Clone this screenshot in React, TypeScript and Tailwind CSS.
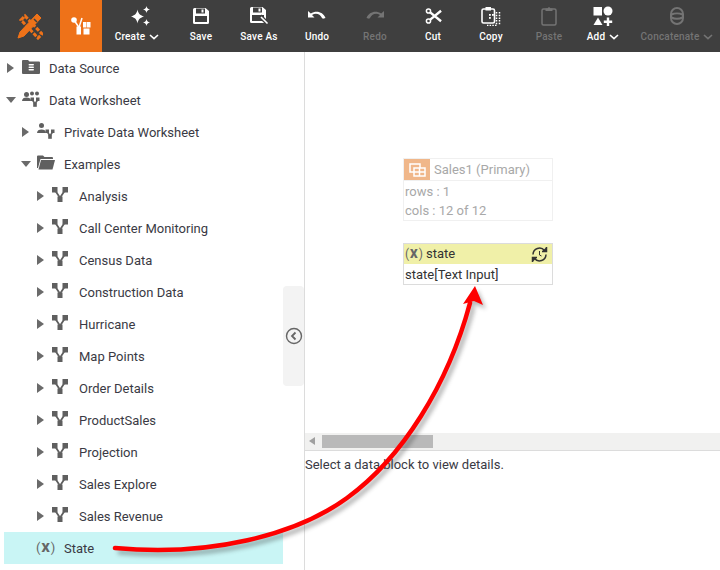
import type { ReactNode } from "react";

const ON = "#ffffff";
const OFF = "#747474";

function Chevron({ color = "#fff" }: { color?: string }) {
  return (
    <svg width="10" height="6" viewBox="0 0 10 6" className="ml-[4px]">
      <path d="M1 1l4 3.600L9 1" fill="none" stroke={color} strokeWidth="1.600" />
    </svg>
  );
}

function Sparkle() {
  return (
    <svg width="20" height="20" viewBox="0 0 20 20" fill="#fff" className="ml-[8px]">
      <path d="M6.500 3.500C7.300 7.500 8.500 9 13 10.500 8.500 12 7.300 13.500 6.500 17.500 5.700 13.500 4.500 12 0 10.500 4.500 9 5.700 7.500 6.500 3.500z" />
      <path d="M15.500 0C15.900 2 16.500 2.700 19 3.500 16.500 4.300 15.900 5 15.500 7 15.100 5 14.500 4.300 12 3.500 14.500 2.700 15.100 2 15.500 0z" />
      <path d="M15.500 13C15.900 15 16.500 15.700 19 16.500 16.500 17.300 15.900 18 15.500 20 15.100 18 14.500 17.300 12 16.500 14.500 15.700 15.100 15 15.500 13z" />
    </svg>
  );
}

function SaveIcon() {
  return (
    <svg width="18" height="18" viewBox="0 0 18 18">
      <path d="M2.500 1h11l3.500 3v11.500a1.500 1.500 0 0 1-1.500 1.500h-13A1.500 1.500 0 0 1 1 15.500v-13A1.500 1.500 0 0 1 2.500 1z" fill={ON} />
      <rect x="4" y="1.500" width="9" height="5" fill="#3f3f3f" />
      <rect x="9.500" y="2.500" width="2" height="3" fill={ON} />
      <rect x="3" y="9" width="12" height="6" fill="#3f3f3f" />
    </svg>
  );
}

function SaveAsIcon() {
  return (
    <svg width="20" height="19" viewBox="0 0 20 19">
      <path d="M2.500 1h11l3.500 3v11.500a1.500 1.500 0 0 1-1.500 1.500h-13A1.500 1.500 0 0 1 1 15.500v-13A1.500 1.500 0 0 1 2.500 1z" fill={ON} />
      <rect x="4" y="1.500" width="9" height="5" fill="#3f3f3f" />
      <rect x="9.500" y="2.500" width="2" height="3" fill={ON} />
      <rect x="3" y="9" width="12" height="6" fill="#3f3f3f" />
      <path d="M11 10l7 7" stroke="#3f3f3f" strokeWidth="4" />
      <path d="M12 11l6.500 6.500" stroke={ON} strokeWidth="1.600" />
    </svg>
  );
}

function UndoIcon({ flip, color }: { flip?: boolean; color: string }) {
  return (
    <svg width="18" height="12" viewBox="0 0 18 12" className={flip ? "-scale-x-100" : ""}>
      <path d="M0 1v6.500h6.500L4 5c3.500-2.500 8-1.500 10 3l1 .8L17.500 8C15 1.500 8 0 2.800 3.500z" fill={color} />
    </svg>
  );
}

function Scissors() {
  return (
    <svg width="17" height="18" viewBox="0 0 18 18" fill="none" stroke={ON}>
      <circle cx="3.700" cy="3.700" r="2.200" strokeWidth="1.600" />
      <circle cx="3.700" cy="14.300" r="2.200" strokeWidth="1.600" />
      <path d="M5.500 5.200L17 14.500M5.500 12.800L17 3.500" strokeWidth="2.600" />
    </svg>
  );
}

function CopyIcon() {
  return (
    <svg width="20" height="20" viewBox="0 0 20 20" fill="none">
      <rect x="1" y="3" width="12.500" height="14" rx="1.500" stroke={ON} strokeWidth="1.600" />
      <rect x="4.500" y="1" width="5.500" height="3.500" fill={ON} />
      <rect x="8" y="8" width="1.800" height="1.800" fill={ON} />
      <rect x="11" y="8" width="1.800" height="1.800" fill={ON} />
      <rect x="8" y="11" width="1.800" height="1.800" fill={ON} />
      <path d="M15.500 6v13.500H6" stroke={ON} strokeWidth="1.500" strokeDasharray="1.500 1.200" />
      <path d="M18.500 6v13.500" stroke={ON} strokeWidth="1.500" strokeDasharray="1.500 1.200" />
    </svg>
  );
}

function PasteIcon() {
  return (
    <svg width="16" height="20" viewBox="0 0 16 20" fill="none">
      <rect x="1" y="3" width="14" height="16" rx="1.500" stroke={OFF} strokeWidth="1.500" />
      <path d="M4.500 5V2.500h2.200a1.300 1.300 0 0 1 2.600 0h2.200V5z" fill={OFF} />
    </svg>
  );
}

function AddIcon() {
  return (
    <svg width="20" height="20" viewBox="0 0 20 20" fill={ON}>
      <rect x="0.500" y="1" width="8.500" height="8.500" />
      <circle cx="15" cy="5" r="4.500" />
      <path d="M5 11.500l4.500 7.500h-9z" />
      <path d="M13.800 11.500h2.400v3h3v2.400h-3v3h-2.400v-3h-3v-2.400h3z" />
    </svg>
  );
}

function ConcatIcon() {
  return (
    <svg width="16" height="20" viewBox="0 0 16 20" fill="none" stroke={OFF} strokeWidth="2">
      <rect x="2" y="2" width="12" height="16" rx="6" />
      <path d="M2.500 8.500c3-1.500 8-1.500 11 0M2.500 11.500c3 1.500 8 1.500 11 0" />
    </svg>
  );
}

function Tool({
  label,
  icon,
  width,
  off,
  menu,
}: {
  label: string;
  icon: ReactNode;
  width: string;
  off?: boolean;
  menu?: boolean;
}) {
  return (
    <div className={`flex flex-col items-center ${width}`}>
      <div className="flex h-[30px] items-center justify-center pt-[1px]">{icon}</div>
      <div
        className={`mt-[1px] flex h-[12px] items-center text-[10px] leading-[12px] tracking-[0.2px] font-medium ${
          off ? "text-[#747474]" : "text-white"
        }`}
      >
        {label}
        {menu && <Chevron color={off ? OFF : "#fff"} />}
      </div>
    </div>
  );
}

function Toolbar() {
  return (
    <div className="flex h-[52px] items-stretch bg-[#3f3f3f]">
      <div className="flex w-[60px] items-center justify-center">
        <svg width="26" height="28" viewBox="0 0 26 28" fill="none" stroke="#ee7219">
          <path d="M4 8l4-4 17 18-4 4z" strokeWidth="3" strokeDasharray="4 1.500" />
          <path d="M20 2l4 4L7 24l-6 2 2-6z" fill="#ee7219" strokeWidth="1" />
          <path d="M17 7l3 3" stroke="#3f3f3f" strokeWidth="1.500" />
        </svg>
      </div>
      <div className="flex w-[42px] items-center justify-center bg-[#ee7219]">
        <svg width="20" height="18" viewBox="0 0 20 18" fill={ON}>
          <circle cx="3" cy="3" r="2.800" />
          <path d="M3 3l5 7.500" stroke={ON} strokeWidth="1.500" />
          <path d="M11 1l-3 9.500" stroke={ON} strokeWidth="1.500" />
          <rect x="5.500" y="9.500" width="4.500" height="8" />
          <rect x="12" y="5" width="3.500" height="5.500" />
          <rect x="16" y="5" width="3.500" height="5.500" />
          <rect x="12.500" y="11.500" width="6" height="6" />
        </svg>
      </div>
      <Tool label="Create" width="w-[70px]" icon={<Sparkle />} menu />
      <Tool label="Save" width="w-[58px]" icon={<SaveIcon />} />
      <Tool label="Save As" width="w-[58px]" icon={<SaveAsIcon />} />
      <Tool label="Undo" width="w-[58px]" icon={<UndoIcon color={ON} />} />
      <Tool label="Redo" width="w-[58px]" icon={<UndoIcon flip color={OFF} />} off />
      <Tool label="Cut" width="w-[58px]" icon={<Scissors />} />
      <Tool label="Copy" width="w-[58px]" icon={<CopyIcon />} />
      <Tool label="Paste" width="w-[58px]" icon={<PasteIcon />} off />
      <Tool label="Add" width="w-[50px]" icon={<AddIcon />} menu />
      <Tool label="Concatenate" width="w-[92px] pl-[6px]" icon={<ConcatIcon />} off menu />
    </div>
  );
}

function Caret({ open }: { open?: boolean }) {
  return open ? (
    <svg width="10" height="6" viewBox="0 0 10 6">
      <path d="M0 0h10L5 6z" fill="#6a6a6a" />
    </svg>
  ) : (
    <svg width="10" height="10" viewBox="0 0 10 10" className="ml-[1px]">
      <path d="M0 0l7 5-7 5z" fill="#6a6a6a" />
    </svg>
  );
}

function FlowIcon() {
  return (
    <svg width="16" height="15" viewBox="0 0 16 15" fill="#5f5f5f">
      <rect x="0" y="0" width="5.500" height="5.500" />
      <rect x="10.500" y="0" width="5.500" height="5.500" />
      <rect x="5.500" y="9.500" width="5" height="5.500" />
      <path d="M3.500 4l4 6M12.500 4l-4 6" stroke="#5f5f5f" strokeWidth="1.800" />
    </svg>
  );
}

function SourceIcon() {
  return (
    <svg width="18" height="15" viewBox="0 0 18 15">
      <path d="M0 2a1 1 0 0 1 1-1h5l1.500 1.500H17a1 1 0 0 1 1 1V14a1 1 0 0 1-1 1H1a1 1 0 0 1-1-1z" fill="#5f5f5f" />
      <rect x="6.500" y="5" width="5.500" height="1.600" rx=".8" fill="#fff" />
      <rect x="6.500" y="7.500" width="5.500" height="1.600" rx=".8" fill="#fff" />
      <rect x="6.500" y="10" width="5.500" height="1.600" rx=".8" fill="#fff" />
    </svg>
  );
}

function WorksheetIcon({ shared }: { shared?: boolean }) {
  return (
    <svg width="18" height="16" viewBox="0 0 18 16" fill="#5f5f5f">
      <circle cx="4.500" cy={shared ? 3.500 : 2.500} r="2.500" />
      <path d="M0 10c0-2.500 2-3.500 4.500-3.500S9 7.500 9 10z" />
      {shared && <circle cx="10" cy="2.500" r="2" />}
      {shared && <circle cx="15" cy="2.500" r="2" />}
      <rect x="8.500" y="6.500" width="3.500" height="3.500" />
      <rect x="14" y="6.500" width="3.500" height="3.500" />
      <rect x="11.200" y="12" width="3.600" height="3.800" />
      <path d="M10.500 9l2.500 4M15.500 9L13 13" stroke="#5f5f5f" strokeWidth="1.600" />
    </svg>
  );
}

function FolderIcon() {
  return (
    <svg width="18" height="15" viewBox="0 0 18 15" fill="#5f5f5f">
      <path d="M0 1.500A1 1 0 0 1 1 .5h5L7.500 2H15a1 1 0 0 1 1 1v1H3.500L1 13H0z" />
      <path d="M4 5h14l-2.500 9.500H1.500z" />
    </svg>
  );
}

function VarMark({ className }: { className: string }) {
  return (
    <span className={`tracking-[1px] text-[#666] ${className}`}>
      (<span className="font-black">X</span>)
    </span>
  );
}

function Row({
  left,
  open,
  icon,
  label,
}: {
  left: string;
  open?: boolean;
  icon: ReactNode;
  label: string;
}) {
  return (
    <div className={`flex h-8 items-center ${left}`}>
      <div className="flex w-[16px] shrink-0 items-center">
        <Caret open={open} />
      </div>
      <div className="flex w-[27px] shrink-0 items-center pb-[3px]">{icon}</div>
      <span className="mt-[2px] text-[13px] text-[#3a3a44]">{label}</span>
    </div>
  );
}

const EXAMPLES = [
  "Analysis",
  "Call Center Monitoring",
  "Census Data",
  "Construction Data",
  "Hurricane",
  "Map Points",
  "Order Details",
  "ProductSales",
  "Projection",
  "Sales Explore",
  "Sales Revenue",
];

function Sidebar() {
  return (
    <div className="w-[305px] shrink-0 border-r border-[#dcdcdc]">
      <Row left="pl-[6px]" icon={<SourceIcon />} label="Data Source" />
      <Row left="pl-[6px]" open icon={<WorksheetIcon shared />} label="Data Worksheet" />
      <Row left="pl-[21px]" icon={<WorksheetIcon />} label="Private Data Worksheet" />
      <Row left="pl-[21px]" open icon={<FolderIcon />} label="Examples" />
      {EXAMPLES.map((name) => (
        <Row key={name} left="pl-[36px]" icon={<FlowIcon />} label={name} />
      ))}
      <div className="ml-[4px] flex h-8 w-[279px] items-center bg-[#c9f5f5] pl-[32px]">
        <VarMark className="w-[28px] text-[13px]" />
        <span className="mt-[2px] text-[13px] text-[#3a3a44]">State</span>
      </div>
    </div>
  );
}

function Blocks() {
  return (
    <>
      <div className="absolute left-[98px] top-[106px] h-[63px] w-[150px] border border-[#f0f0f0]">
        <div className="flex h-[22px] items-center border-b border-[#f0f0f0]">
          <div className="flex h-[21px] w-[26px] items-center justify-center bg-[#f0b78a]">
            <svg width="17" height="14" viewBox="0 0 17 14" fill="none" stroke="#fff" strokeWidth="1.500">
              <rect x="1" y="1" width="10" height="8" />
              <rect x="5" y="5" width="11" height="8" fill="#f0b78a" />
              <path d="M5 9h11M10.500 5v8" />
            </svg>
          </div>
          <span className="ml-[4px] text-[13px] text-[#a8a8a8]">Sales1 (Primary)</span>
        </div>
        <div className="pl-[1px] pt-[1px] text-[13px] leading-[19px] text-[#a8a8a8]">
          <div>rows : 1</div>
          <div>cols : 12 of 12</div>
        </div>
      </div>
      <div className="absolute left-[98px] top-[191px] h-[42px] w-[150px] border border-[#dcdcdc]">
        <div className="flex h-[20px] items-center bg-[#f0f0a8] pl-[1px]">
          <VarMark className="w-[21px] text-[12px]" />
          <span className="text-[13px] text-[#333]">state</span>
          <svg width="17" height="17" viewBox="0 0 17 17" fill="none" stroke="#333" strokeWidth="1.500" className="ml-auto mr-[4px]">
            <path d="M2 8.500a6.500 6.500 0 0 1 11.500-4" />
            <path d="M15 8.500a6.500 6.500 0 0 1-11.500 4" />
            <path d="M15.500 1v4.500H11" fill="#333" />
            <path d="M1.500 16v-4.500H6" fill="#333" />
            <path d="M8.500 5v4l2 1" strokeWidth="1" />
          </svg>
        </div>
        <div className="pl-[1px] pt-[1px] text-[13px] leading-[20px] text-[#333]">state[Text Input]</div>
      </div>
    </>
  );
}

function Arrow() {
  return (
    <svg width="720" height="570" viewBox="0 0 720 570" fill="none" className="absolute left-0 top-0 pointer-events-none">
      <g opacity="0.35" transform="translate(3 4)" className="blur-[2px]">
        <path d="M115 548C210 557 296 535 347 498C402 458 448 385 470 303" stroke="#333" strokeWidth="5" />
        <path d="M475 286l8 19-9-4-11 3z" fill="#333" />
      </g>
      <path d="M115 548C210 557 296 535 347 498C402 458 448 385 470 303" stroke="#fe0000" strokeWidth="4.500" strokeLinecap="round" />
      <path d="M475 286l8 19-9-4-11 3z" fill="#fe0000" />
    </svg>
  );
}

export default function App() {
  return (
    <div
      className="relative h-[570px] w-[720px] overflow-hidden bg-white"
      style={{ fontFamily: "Roboto, sans-serif" }}
    >
      <Toolbar />
      <div className="flex h-[518px]">
        <Sidebar />
        <div className="flex min-w-0 flex-1 flex-col">
          <div className="relative h-[381px]">
            <Blocks />
          </div>
          <div className="flex h-[18px] items-center border-b border-[#dcdcdc] bg-[#f1f1f0] pb-[1px]">
            <svg width="6" height="8" viewBox="0 0 6 8" className="ml-[4px]">
              <path d="M6 0v8L0 4z" fill="#a0a0a0" />
            </svg>
            <div className="ml-[7px] h-[13px] w-[111px] bg-[#b9b9b9]" />
          </div>
          <div className="pt-[5px] text-[13px] leading-[18px] text-[#3a3a44]">
            Select a data block to view details.
          </div>
        </div>
      </div>
      <div className="absolute left-[283px] top-[286px] flex h-[100px] w-[21px] items-center justify-center rounded-[4px] bg-[#f3f3f3]">
        <svg width="18" height="18" viewBox="0 0 18 18" fill="none" stroke="#666">
          <circle cx="9" cy="9" r="7.500" strokeWidth="1.400" />
          <path d="M10.500 5.500L7 9l3.500 3.500" strokeWidth="1.800" />
        </svg>
      </div>
      <Arrow />
    </div>
  );
}
